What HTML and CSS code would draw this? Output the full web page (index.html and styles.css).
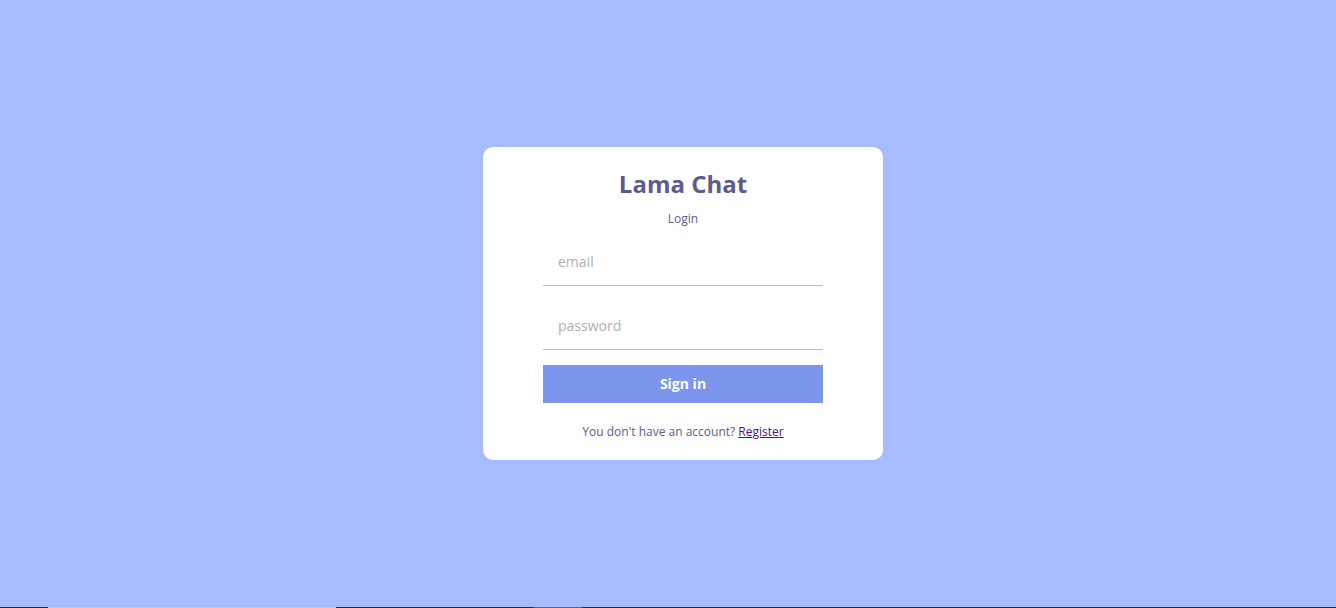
FILE: index.html
```html
<!DOCTYPE html>
<html>
<head>
<meta charset="utf-8">
<link rel="stylesheet" href="styles.css">
</head>
<body>
<div class="page">
  <div class="card">
    <span class="logo">Lama Chat</span>
    <span class="title">Login</span>
    <form class="form">
      <input class="field" type="email" placeholder="email">
      <input class="field" type="password" placeholder="password">
      <button class="btn" type="button">Sign in</button>
    </form>
    <p class="note">You don't have an account? <a href="#" class="link">Register</a></p>
  </div>
</div>
<div class="strip">
  <div class="seg dark s1"></div>
  <div class="seg light s2"></div>
  <div class="seg dark s3"></div>
  <div class="seg gray s4"></div>
  <div class="seg dark s5"></div>
</div>
</body>
</html>
```
FILE: styles.css
```css
* { box-sizing: border-box; }
html, body { margin: 0; padding: 0; }
body {
  font-family: "Open Sans", "Noto Sans", sans-serif;
  background: #a7bcff;
  overflow: hidden;
}
.page {
  height: 607px;
  padding-left: 30px;
  display: flex;
  align-items: center;
  justify-content: center;
}
.card {
  width: 400px;
  background: #fff;
  border-radius: 10px;
  padding: 20px 60px;
  display: flex;
  flex-direction: column;
  align-items: center;
  gap: 10px;
}
.logo {
  color: #5d5b8d;
  font-weight: 700;
  font-size: 24px;
  line-height: 33px;
}
.title {
  color: #5d5b8d;
  font-size: 12px;
  line-height: 17px;
}
.form {
  width: 280px;
  display: flex;
  flex-direction: column;
  gap: 15px;
}
.field {
  width: 100%;
  padding: 15px;
  border: none;
  border-bottom: 1px solid #a7bcff;
  font-family: inherit;
  font-size: 14px;
  line-height: 18px;
  height: 49px;
  outline: none;
  color: #333;
}
.field::placeholder { color: rgb(175, 175, 175); }
.btn {
  background: #7b96ec;
  color: #fff;
  border: none;
  padding: 10px;
  height: 38px;
  font-family: inherit;
  font-weight: 700;
  font-size: 14px;
  line-height: 18px;
  cursor: pointer;
}
.note {
  margin: 10px 0 0;
  color: #5d5b8d;
  font-size: 12px;
  line-height: 17px;
}
.link { color: #4b0f8c; }
.strip {
  display: flex;
  height: 1px;
}
.seg { height: 1px; }
.dark { background: #1e2d50; }
.light { background: #c6cbdc; }
.gray { background: #56668a; }
.s1 { width: 48px; }
.s2 { width: 288px; }
.s3 { width: 198px; }
.s4 { width: 48px; }
.s5 { flex: 1; }
```
